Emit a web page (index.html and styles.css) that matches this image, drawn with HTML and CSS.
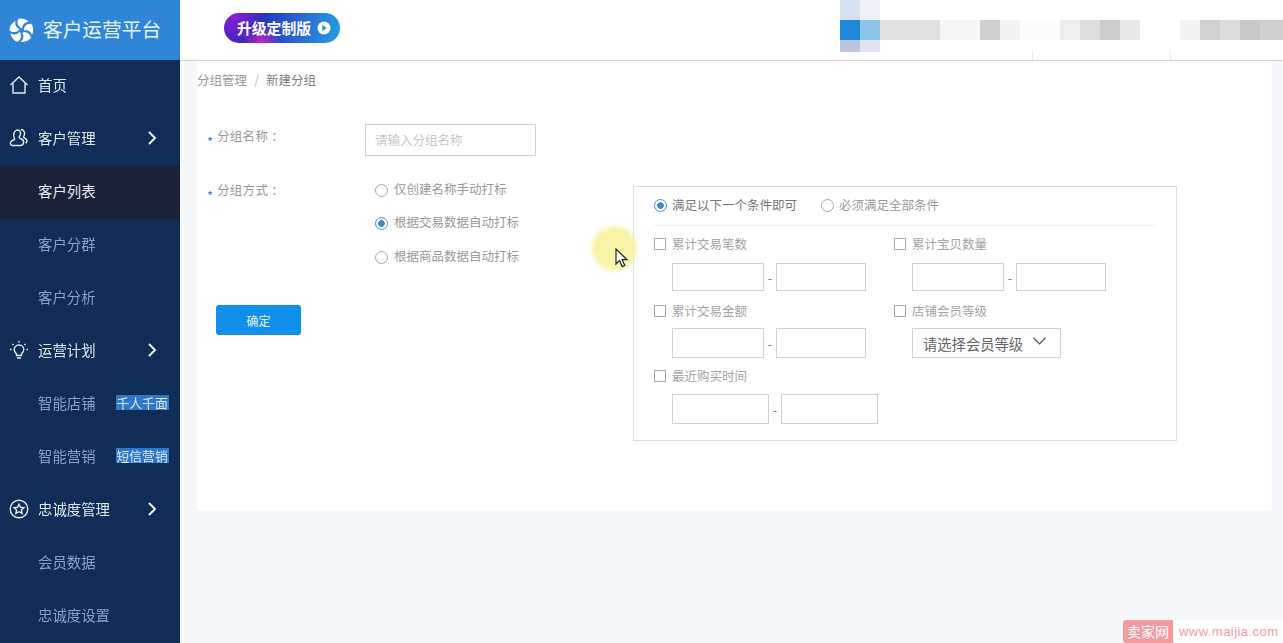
FILE: index.html
```html
<!DOCTYPE html>
<html lang="zh-CN">
<head>
    <meta charset="UTF-8">
    <title>客户运营平台</title>
    <link rel="stylesheet" href="styles.css">
</head>
<body>

<div class="app">
    <aside class="sidebar">
        <div class="logo">
            <svg class="logo-icon" viewBox="0 0 26 26" fill="#fff">
                <path d="M13 10.500C10 9 7.500 6 9.500 1c4-1.200 8.500.2 11 3C17 4.200 14 6.500 13.800 10.500z"/>
                <path d="M13 10.500C10 9 7.500 6 9.500 1c4-1.200 8.500.2 11 3C17 4.200 14 6.500 13.800 10.500z" transform="rotate(72 13 13)"/>
                <path d="M13 10.500C10 9 7.500 6 9.500 1c4-1.200 8.500.2 11 3C17 4.200 14 6.500 13.800 10.500z" transform="rotate(144 13 13)"/>
                <path d="M13 10.500C10 9 7.500 6 9.500 1c4-1.200 8.500.2 11 3C17 4.200 14 6.500 13.800 10.500z" transform="rotate(216 13 13)"/>
                <path d="M13 10.500C10 9 7.500 6 9.500 1c4-1.200 8.500.2 11 3C17 4.200 14 6.500 13.800 10.500z" transform="rotate(288 13 13)"/>
            </svg>
            <span>客户运营平台</span>
        </div>
        <nav class="menu">
            <a class="item parent">
                <svg class="ico" viewBox="0 0 20 20"><path d="M1.500 10 10 2l8.500 8M4 8.500V18h12V8.500"/></svg>
                <span>首页</span>
            </a>
            <a class="item parent">
                <svg class="ico" viewBox="0 0 20 20"><path d="M7 2.500c2.500-1.500 5 .5 4.500 3.500-.2 1.500-1 2.500-1.500 3 0 1 1 1.500 2.500 2 2 .8 2.500 2 2 4-.3 1.500-1.500 2.500-3 2.500H3.500C2 17.500 1 16 1.500 14.500c.5-1.800 2.500-2.500 4-3 .5-.5 0-1.500-.5-2.500C4.300 7 4.800 3.800 7 2.500zM12 1.500c2.500.2 4 2.500 3.500 5-.2 1-.8 2-1 2.500 0 .8 2 1.200 3 2.500.8 1.200.5 3-1 3.500"/></svg>
                <span>客户管理</span>
                <svg class="chev" viewBox="0 0 10 16"><path d="M2 2l6 6-6 6"/></svg>
            </a>
            <a class="item sub active"><span>客户列表</span></a>
            <a class="item sub"><span>客户分群</span></a>
            <a class="item sub"><span>客户分析</span></a>
            <a class="item parent">
                <svg class="ico" viewBox="0 0 20 20"><path d="M10 5c-3 0-4.800 2.200-4.800 4.500 0 2 1.300 3 2.300 4.500v1.500h5V14c1-1.500 2.300-2.500 2.300-4.500C14.800 7.200 13 5 10 5zM8 18h4M10 1v1.500M1 9.500h1.500M17.500 9.500H19M3.500 4l1 1M16.500 4l-1 1"/></svg>
                <span>运营计划</span>
                <svg class="chev" viewBox="0 0 10 16"><path d="M2 2l6 6-6 6"/></svg>
            </a>
            <a class="item sub"><span>智能店铺</span><em class="tag">千人千面</em></a>
            <a class="item sub"><span>智能营销</span><em class="tag">短信营销</em></a>
            <a class="item parent">
                <svg class="ico" viewBox="0 0 20 20"><circle cx="10" cy="10" r="8.800"/><path d="M10 5.200l1.500 3.100 3.400.4-2.500 2.300.7 3.400-3.100-1.700-3.100 1.700.7-3.400-2.500-2.300 3.400-.4z"/></svg>
                <span>忠诚度管理</span>
                <svg class="chev" viewBox="0 0 10 16"><path d="M2 2l6 6-6 6"/></svg>
            </a>
            <a class="item sub"><span>会员数据</span></a>
            <a class="item sub"><span>忠诚度设置</span></a>
        </nav>
    </aside>

    <div class="main">
        <header class="topbar">
            <div class="upgrade">
                <span>升级定制版</span>
                <svg class="play" viewBox="0 0 14 14"><circle cx="7" cy="7" r="6.500" fill="#fff"/><path d="M5.200 4l4.600 3-4.600 3z" fill="#2a8fd8"/></svg>
            </div>
            <!-- blurred account area -->
            <svg class="mosaic" viewBox="0 0 443 60" width="443" height="60">
                <rect x="0" y="0" width="20" height="20" fill="#d6e2f0"/>
                <rect x="20" y="0" width="20" height="20" fill="#eef2f8"/>
                <rect x="0" y="20" width="20" height="20" fill="#1f88d8"/>
                <rect x="20" y="20" width="20" height="20" fill="#8cc4ea"/>
                <rect x="40" y="20" width="60" height="20" fill="#e1e1e1"/>
                <rect x="100" y="20" width="40" height="20" fill="#f6f6f6"/>
                <rect x="140" y="20" width="20" height="20" fill="#cfcfcf"/>
                <rect x="160" y="20" width="20" height="20" fill="#f3f3f5"/>
                <rect x="180" y="20" width="40" height="20" fill="#fcfcfd"/>
                <rect x="220" y="20" width="20" height="20" fill="#eeeeee"/>
                <rect x="240" y="20" width="20" height="20" fill="#dddddd"/>
                <rect x="260" y="20" width="20" height="20" fill="#cccccc"/>
                <rect x="280" y="20" width="20" height="20" fill="#e8e8e8"/>
                <rect x="340" y="20" width="20" height="20" fill="#f3f3f3"/>
                <rect x="360" y="20" width="20" height="20" fill="#d0d0d0"/>
                <rect x="380" y="20" width="20" height="20" fill="#dcdcdc"/>
                <rect x="400" y="20" width="20" height="20" fill="#c8c8c8"/>
                <rect x="420" y="20" width="23" height="20" fill="#cfcfcf"/>
                <rect x="0" y="40" width="20" height="12" fill="#bcc6e0"/>
                <rect x="20" y="40" width="20" height="12" fill="#e0e4f0"/>
                <rect x="192" y="50" width="1" height="10" fill="#ededed"/>
                <rect x="330" y="50" width="1" height="10" fill="#ededed"/>
            </svg>
        </header>

        <div class="page">
            <section class="card">
                <div class="crumb">分组管理<i>/</i><b>新建分组</b></div>

                <div class="name-row">
                    <label class="field-label"><s>*</s>分组名称 ：</label>
                    <input class="name-input" placeholder="请输入分组名称">
                </div>

                <div class="body-row">
                    <div class="left-col">
                        <div class="method-row">
                            <label class="field-label"><s>*</s>分组方式 ：</label>
                            <div class="radios">
                                <div class="radio-line"><span class="radio"></span>仅创建名称手动打标</div>
                                <div class="radio-line"><span class="radio on"></span>根据交易数据自动打标</div>
                                <div class="radio-line"><span class="radio"></span>根据商品数据自动打标</div>
                            </div>
                        </div>
                        <button class="ok">确定</button>
                    </div>

                    <div class="panel">
                        <div class="panel-head">
                            <div class="radio-line strong"><span class="radio on"></span>满足以下一个条件即可</div>
                            <div class="radio-line"><span class="radio"></span>必须满足全部条件</div>
                        </div>
                        <div class="conds">
                            <div class="cond first">
                                <div class="check-line"><span class="check"></span>累计交易笔数</div>
                                <div class="range"><input><span>-</span><input></div>
                            </div>
                            <div class="cond first">
                                <div class="check-line"><span class="check"></span>累计宝贝数量</div>
                                <div class="range"><input><span>-</span><input></div>
                            </div>
                            <div class="cond tall">
                                <div class="check-line"><span class="check"></span>累计交易金额</div>
                                <div class="range"><input><span>-</span><input></div>
                            </div>
                            <div class="cond tall">
                                <div class="check-line"><span class="check"></span>店铺会员等级</div>
                                <div class="select">请选择会员等级
                                    <svg viewBox="0 0 16 10"><path d="M1.500 1.500 8 8l6.500-6.500"/></svg>
                                </div>
                            </div>
                            <div class="cond last">
                                <div class="check-line"><span class="check"></span>最近购买时间</div>
                                <div class="range wide"><input><span>-</span><input></div>
                            </div>
                        </div>
                    </div>
                </div>
            </section>
        </div>
    </div>
</div>

<!-- screen recording pointer -->
<div class="spot"></div>
<svg class="pointer" viewBox="0 0 14 20"><path d="M1 1v15l3.600-3.400 2.600 6 2.600-1.100-2.600-5.800H12z" fill="#fff" stroke="#222" stroke-width="1.200"/></svg>

<div class="watermark"><span class="wm-box">卖家网</span><span class="wm-url">www.maijia.com</span></div>

</body>
</html>
```

FILE: styles.css
```css
* {
    box-sizing: border-box;
}
html, body {
    margin: 0;
    height: 100%;
    overflow: hidden;
}
body {
    font-family: "Noto Sans CJK SC", "Noto Sans", sans-serif;
    font-size: 12.5px;
    color: #999;
    background-color: #f5f7fb;
}
.app {
    display: flex;
    height: 643px;
    filter: blur(0.4px); /* the reference is a video frame */
}

/* Sidebar */
.sidebar {
    width: 180px;
    flex-shrink: 0;
    background-color: #0f2d56;
    color: #e4eaf2;
    overflow: hidden;
}
.logo {
    height: 60px;
    display: flex;
    align-items: center;
    padding-left: 9px;
    padding-bottom: 4px;
    gap: 9px;
    background-color: #2f86d8;
    color: #e8f2fb;
    font-size: 19.7px;
}
.logo-icon {
    width: 25px;
    height: 25px;
    flex-shrink: 0;
    margin-top: 4px;
}
.item {
    height: 53px;
    display: flex;
    align-items: center;
    padding-left: 38px;
    padding-bottom: 5px;
    font-size: 14.4px;
    position: relative;
}
.parent {
    color: #dfe6f0;
}
.sub {
    color: #86a0c6;
}
.sub.active {
    background-color: #1b2238;
    color: #e4e8f0;
}
.ico {
    position: absolute;
    left: 9px;
    top: 15px;
    width: 20px;
    height: 20px;
    fill: none;
    stroke: #e4eaf2;
    stroke-width: 1.4;
}
.chev {
    position: absolute;
    left: 147px;
    top: 17px;
    width: 10px;
    height: 16px;
    fill: none;
    stroke: #eef2f8;
    stroke-width: 2;
}
.tag {
    margin-left: 20px;
    width: 53px;
    height: 15px;
    line-height: 15px;
    text-align: center;
    font-style: normal;
    font-size: 12.8px;
    color: #dbe8f6;
    background-color: #2e78c8;
}

/* Top bar */
.main {
    flex: 1;
    min-width: 0;
    display: flex;
    flex-direction: column;
}
.topbar {
    height: 61px;
    flex-shrink: 0;
    display: flex;
    align-items: flex-start;
    background-color: #fff;
    border-bottom: 1px solid #d4d4d6;
    padding-left: 44px;
}
.upgrade {
    width: 116px;
    height: 30px;
    margin-top: 13px;
    border-radius: 15px;
    display: flex;
    align-items: center;
    padding-left: 13px;
    padding-bottom: 2px;
    gap: 6px;
    color: #fff;
    font-size: 14.8px;
    font-weight: 700;
    background:
        radial-gradient(circle at 32% 100%, #d01fc0 0, rgba(208, 31, 192, 0) 22%),
        radial-gradient(circle at 8% 10%, #8a1fd0 0, rgba(138, 31, 208, 0) 30%),
        linear-gradient(100deg, #3a1fc0 0%, #2430c0 30%, #2a60d0 60%, #23a0e4 100%);
}
.play {
    width: 14px;
    height: 14px;
    margin-top: 2px;
}
.mosaic {
    margin-left: auto;
    flex-shrink: 0;
}

/* Content */
.page {
    flex: 1;
    padding-left: 17px;
    padding-right: 11px;
}
.card {
    height: 449px;
    background-color: #fff;
    padding-left: 10px;
}
.crumb {
    height: 63px;
    margin-left: -10px;
    padding-top: 9px;
    line-height: 20px;
    color: #9a9a9a;
}
.crumb i {
    font-style: normal;
    color: #c4c4c4;
    margin: 0 7px;
}
.crumb b {
    font-weight: 400;
    color: #808080;
}
.name-row {
    display: flex;
    height: 32px;
    margin-bottom: 23px;
}
.field-label {
    width: 158px;
    flex-shrink: 0;
    line-height: 24px;
    color: #999;
    letter-spacing: 0.3px;
}
.field-label s {
    display: inline-block;
    width: 10px;
    text-decoration: none;
    color: #3f7cc0;
    font-size: 13px;
    line-height: 1;
    vertical-align: -6px;
}
.name-input {
    width: 171px;
    height: 32px;
    padding: 0 9px 2px;
    border: 1px solid #d2d2d6;
    font: inherit;
    outline: none;
}
.name-input::placeholder {
    color: #c8c8c8;
}
.body-row {
    display: flex;
}
.left-col {
    width: 426px;
    flex-shrink: 0;
}
.method-row {
    display: flex;
}
.method-row .field-label {
    line-height: 22px;
}
.radios {
    margin-top: -1px;
    padding-left: 10px;
    display: flex;
    flex-direction: column;
    gap: 13.5px;
}
.radio-line {
    height: 20px;
    display: flex;
    align-items: center;
    gap: 6px;
    white-space: nowrap;
    color: #999;
}
.radio {
    width: 13px;
    height: 13px;
    margin-top: 4px;
    border-radius: 50%;
    border: 1px solid #a8a8a8;
    background-color: #fff;
    flex-shrink: 0;
}
.radio.on {
    border-color: #4a90d0;
    background: radial-gradient(circle, #3f86cc 0 3px, #fff 3.6px);
}
.ok {
    display: block;
    width: 85px;
    height: 30px;
    margin: 40px 0 0 9px;
    padding: 0;
    border: none;
    border-radius: 3px;
    background-color: #1090ea;
    color: #e8f4fd;
    font: inherit;
    font-size: 12px;
}

/* Condition panel */
.panel {
    width: 544px;
    height: 255px;
    margin-top: 7px;
    padding: 7px 21px 0 20px;
    border: 1px solid #dedee2;
}
.panel-head {
    display: flex;
    gap: 24px;
    height: 32px;
    padding-bottom: 12px;
    border-bottom: 1px solid #f0f0f2;
}
.panel-head .radio-line {
    gap: 5px;
}
.panel-head .radio {
    margin-top: 2px;
}
.panel-head .strong {
    color: #777;
}
.conds {
    display: grid;
    grid-template-columns: 240px 240px;
}
.cond.first {
    margin-top: 8px;
    height: 67px;
}
.cond.tall {
    height: 65px;
}
.check-line {
    height: 18px;
    display: flex;
    align-items: center;
    gap: 6px;
    color: #a4a4a4;
}
.check {
    width: 12px;
    height: 12px;
    margin-top: 2px;
    border: 1px solid #a8a8a8;
    flex-shrink: 0;
}
.range {
    display: flex;
    align-items: center;
    margin: 11px 0 0 18px;
}
.range span {
    width: 12px;
    text-align: center;
    color: #777;
}
.range input {
    width: 92px;
    height: 28px;
    padding: 0;
    border: 1px solid #d2d2d2;
    outline: none;
}
.range input + span + input {
    width: 90px;
}
.tall .range {
    margin-top: 9px;
}
.tall .range input {
    height: 30px;
}
.last .range {
    margin-top: 10px;
}
.range.wide input,
.range.wide input + span + input {
    width: 97px;
    height: 30px;
}
.select {
    width: 149px;
    height: 30px;
    margin: 9px 0 0 18px;
    padding-left: 10px;
    display: flex;
    align-items: center;
    justify-content: space-between;
    padding-right: 13px;
    border: 1px solid #d2d2d2;
    font-size: 14.3px;
    color: #666;
    white-space: nowrap;
}
.select svg {
    width: 15px;
    height: 10px;
    margin-top: -4px;
    fill: none;
    stroke: #555;
    stroke-width: 1.3;
}

/* Recording overlay */
.spot {
    position: absolute;
    left: 592px;
    top: 226px;
    width: 45px;
    height: 45px;
    border-radius: 50%;
    background-color: #f7f4a8;
    filter: blur(2px);
}
.pointer {
    position: absolute;
    left: 615px;
    top: 248px;
    width: 14px;
    height: 20px;
}
.watermark {
    position: absolute;
    left: 1123px;
    top: 620px;
    width: 160px;
    height: 23px;
    display: flex;
    align-items: center;
    background-color: #fff;
}
.wm-box {
    width: 50px;
    height: 23px;
    line-height: 23px;
    text-align: center;
    border-radius: 3px 0 0 3px;
    background-color: #f39a9f;
    color: #fff;
    font-size: 14px;
}
.wm-url {
    margin-left: 6px;
    font-family: "Liberation Sans", sans-serif;
    font-size: 13px;
    color: #f39a9f;
    letter-spacing: 0.45px;
}
```
